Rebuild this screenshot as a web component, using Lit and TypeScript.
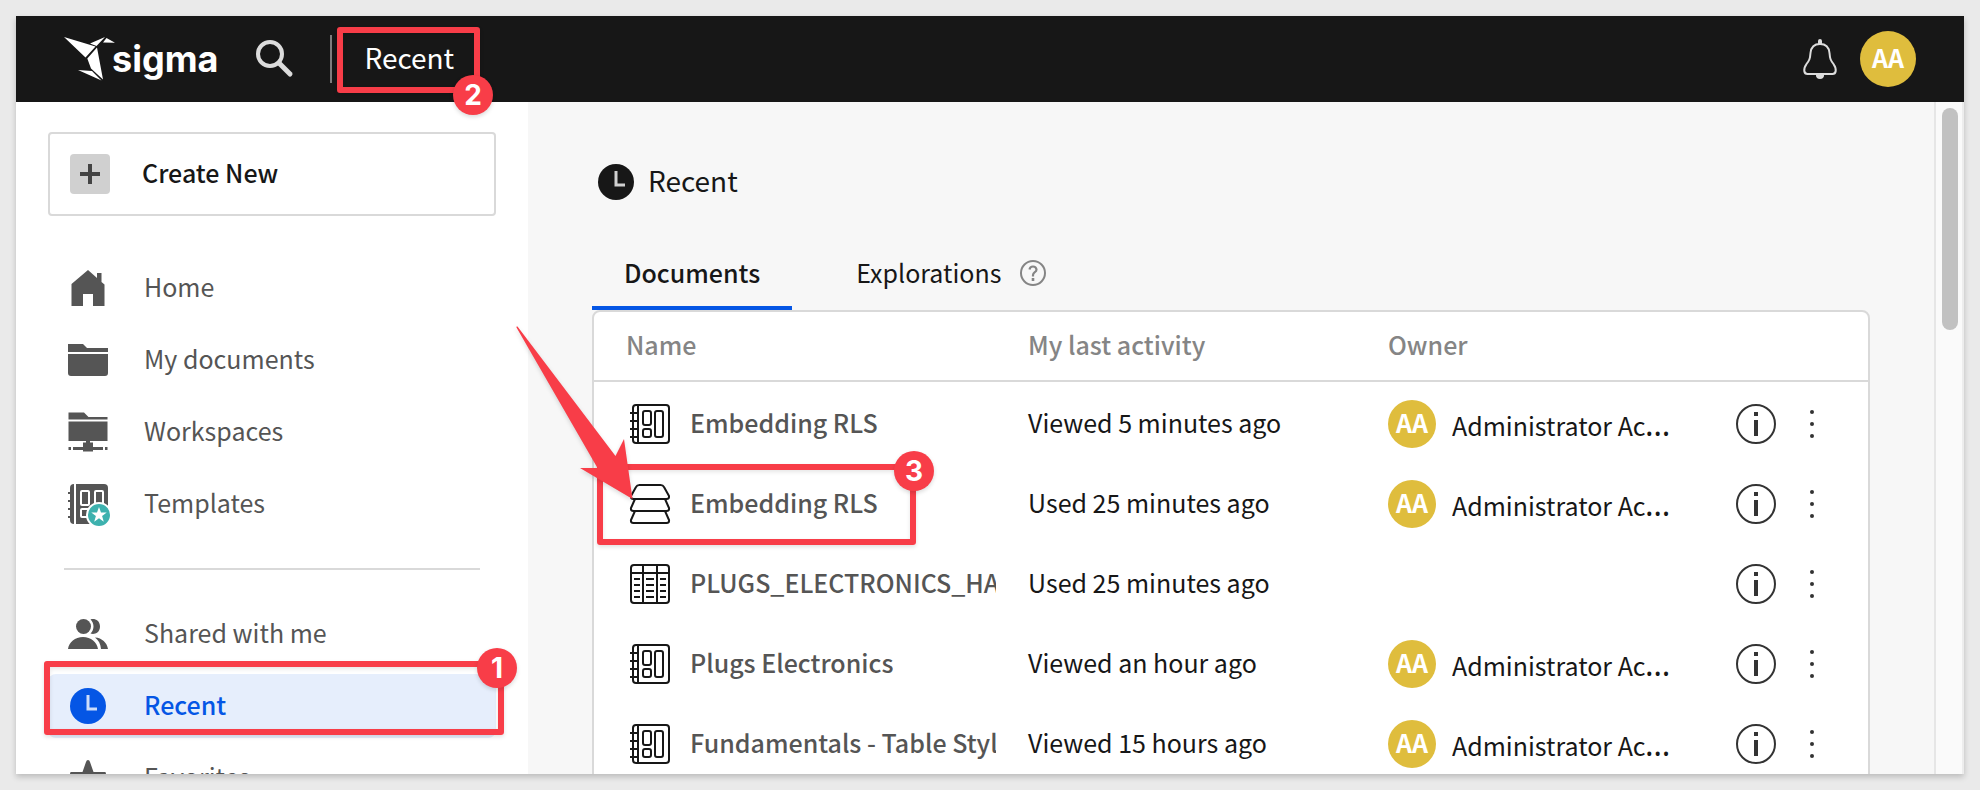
import { LitElement, html, svg, css, nothing } from "lit";
import { customElement, property, state } from "lit/decorators.js";
import { classMap } from "lit/directives/class-map.js";

const workbook = svg`
  <g fill="none" stroke="currentColor" stroke-width="2">
    <rect x="3" y="1" width="36" height="38" rx="3"/>
    <path d="M8 1v38M0 9h8M0 17h8M0 25h8M0 33h8"/>
    <rect x="13" y="7" width="8" height="14" rx="2"/>
    <rect x="13" y="25" width="8" height="8" rx="2"/>
    <rect x="25" y="7" width="8" height="26" rx="2"/>
  </g>`;

const ICONS: Record<string, unknown> = {
  home: svg`<path fill="currentColor" d="M20 2l9 8V5h4.500v9l3 2.500V38H25V26H15v12H3.500V16z"/>`,
  folder: svg`<path fill="currentColor" d="M0 4h15l4 4h21v4H0zM0 14h40v19q0 3-3 3H3q-3 0-3-3z"/>`,
  workspaces: svg`<path fill="currentColor" d="M.5.5H16l4.500 4.500h19v2.500H.5zM.5 9.500h39V29H22v1.500h3V35h10v3H25v1.500H15V38H5v-3h10v-4.500h3V29H.5zM.5 35H3v3H.5zM37 35h2.500v3H37z"/>`,
  templates: svg`
    <rect x="2" y="0" width="38" height="40" rx="4" fill="currentColor"/>
    <path d="M0 9h3M0 17h3M0 25h3M0 33h3" stroke="currentColor" stroke-width="2"/>
    <path d="M7 0v40" stroke="#fff" stroke-width="2"/>
    <g fill="none" stroke="#fff" stroke-width="2">
      <rect x="13" y="7" width="8" height="14" rx="1"/><rect x="27" y="7" width="8" height="14" rx="1"/><rect x="13" y="25" width="8" height="8" rx="1"/>
    </g>
    <circle cx="31" cy="31" r="12" fill="#3db1ae" stroke="#fff" stroke-width="2"/>
    <path fill="#fff" d="M31 23l2 5.500h5.700l-4.600 3.500 1.700 5.700-4.800-3.400-4.800 3.400 1.700-5.700-4.600-3.500H29z"/>`,
  shared: svg`<g fill="currentColor"><circle cx="15.500" cy="12.500" r="7.500"/>
    <path d="M22.500 5.500c3.500-1.500 9.500.5 9.500 7s-6 8.500-9.500 7c4-4 4-10 0-14z"/>
    <path d="M0 35c1-7 7-12 15-12s14 5 15 12zM27 23.500c7 .5 12 5 13 11.500h-7c-.3-5-2.500-9-6-11.500z"/></g>`,
  recent: svg`<circle cx="20" cy="20" r="18" fill="currentColor"/><path d="M20 9v14h9" fill="none" stroke="#fff" stroke-opacity=".8" stroke-width="3"/>`,
  favorites: svg`<path fill="currentColor" d="M20 2q1.500 0 2 2l3.500 10H37q2 1 0 3l-9 7 4 13q-1 2-3 1l-9-7-9 7q-2 1-3-1l4-13-9-7q-2-2 0-3h11.500L18 4q.5-2 2-2z"/>`,
  workbook,
  dataset: svg`<g fill="none" stroke="currentColor" stroke-width="2" stroke-linejoin="round">
    <path d="M9.500 1h21q2.500 0 3.500 2l5 9q.5 3-2.500 3h-33q-3 0-2.500-3l5-9q1-2 3.500-2z"/>
    <path d="M5 15l-4 9q-.5 3 2.500 3h33q3 0 2.500-3l-4-9M5 27l-4 9q-.5 3 2.500 3h33q3 0 2.500-3l-4-9"/></g>`,
  table: svg`<g fill="none" stroke="currentColor" stroke-width="2"><rect x="1" y="1" width="38" height="38" rx="3"/>
    <path d="M1 9h38M13 1v38M27 1v38"/>
    <path d="M4 15h6M16 15h8M30 15h6M4 21h6M16 21h8M30 21h6M4 27h6M16 27h8M30 27h6M4 33h6M16 33h8M30 33h6"/></g>`,
  info: svg`<circle cx="20" cy="20" r="19" fill="none" stroke="currentColor" stroke-width="2"/><path fill="currentColor" d="M18 8h4v4h-4zM18 16h4v16h-4z"/>`,
};

const icon = (name: string) =>
  html`<svg class="icon" viewBox="0 0 40 40" width="40" height="40" aria-hidden="true">${ICONS[name]}</svg>`;

interface NavEntry { id: string; label: string; }
const PRIMARY: NavEntry[] = [
  { id: "home", label: "Home" },
  { id: "folder", label: "My documents" },
  { id: "workspaces", label: "Workspaces" },
  { id: "templates", label: "Templates" },
];
const SECONDARY: NavEntry[] = [
  { id: "shared", label: "Shared with me" },
  { id: "recent", label: "Recent" },
  { id: "favorites", label: "Favorites" },
];

interface Doc { kind: string; name: string; activity: string; owner?: string; }
const DOCS: Doc[] = [
  { kind: "workbook", name: "Embedding RLS", activity: "Viewed 5 minutes ago", owner: "Administrator Account" },
  { kind: "dataset", name: "Embedding RLS", activity: "Used 25 minutes ago", owner: "Administrator Account" },
  { kind: "table", name: "PLUGS_ELECTRONICS_HANDS_ON_LAB_DATA", activity: "Used 25 minutes ago" },
  { kind: "workbook", name: "Plugs Electronics", activity: "Viewed an hour ago", owner: "Administrator Account" },
  { kind: "workbook", name: "Fundamentals - Table Styles", activity: "Viewed 15 hours ago", owner: "Administrator Account" },
];

const shared = css`
  * { box-sizing: border-box; }
  .icon { display: block; flex: none; overflow: visible; }
  button { font: inherit; color: inherit; background: none; border: 0; padding: 0; margin: 0; cursor: pointer; }
  a { color: inherit; text-decoration: none; }
  .label { display: block; padding-bottom: 4px; }
  .avatar {
    display: grid; place-items: center; flex: none; width: 48px; height: 48px; padding-bottom: 4px; border-radius: 50%;
    background: #dfbd3d; color: #fff; font-size: 25px; line-height: 36px; font-weight: 700;
  }
`;

@customElement("app-header")
class AppHeader extends LitElement {
  static styles = [shared, css`
    :host { display: block; flex: none; }
    .bar { display: flex; align-items: center; height: 86px; padding: 0 48px; background: #171717; color: #fff; }
    .logo { display: flex; align-items: center; }
    .bird { display: block; margin-right: -4px; }
    .word { font: 700 36px/44px Inter, sans-serif; }
    .search { margin-left: 37px; padding-bottom: 2px; color: #dcdcdc; }
    .rule { width: 2px; height: 48px; margin: 0 32px 0 37px; background: #7d7d7d; }
    .crumb { font-size: 28px; line-height: 40px; }
    .tools { display: flex; align-items: center; gap: 22px; margin-left: auto; }
    .bell { color: #dcdcdc; }
    .large { width: 56px; height: 56px; }
  `];
  render() {
    return html`<header class="bar">
      <a class="logo" href="#" aria-label="sigma">
        <svg class="bird" width="52" height="44" viewBox="0 0 52 44" fill="#fff" aria-hidden="true">
          <path d="M0 0l31.500 9.500L21.500 20.500zM26 6.500L41 0l-8.500 9zM39 5.500l3.500-4.500 8.500 4.700zM33 10.500l6 32-12-11L23.300 21.500zM14 33l14 1 9.500 9.500z"/>
        </svg>
        <span class="word">sigma</span>
      </a>
      <button class="search" aria-label="Search">
        <svg class="icon" width="38" height="38" viewBox="0 0 38 38" fill="none" stroke="currentColor" stroke-width="4">
          <circle cx="15" cy="15" r="12"/><path d="M24 24l11 11" stroke-linecap="round" stroke-width="5"/>
        </svg>
      </button>
      <span class="rule"></span>
      <span class="crumb label">Recent</span>
      <div class="tools">
        <button class="bell" aria-label="Notifications">
          <svg class="icon" width="36" height="40" viewBox="0 0 36 40" fill="none" stroke="currentColor" stroke-width="2">
            <path d="M18 5c-6 0-9 4-9.500 9-.5 6-1 7-4 11-2 3-2.500 5-2.200 7 .3 2 1.500 3 3.200 3h25c1.700 0 2.900-1 3.200-3 .3-2-.2-4-2.200-7-3-4-3.500-5-4-11C27 9 24 5 18 5z"/>
            <path d="M16 5V2q0-2 2-2t2 2v3zM14 35h8q0 4-4 4t-4-4z" fill="currentColor" stroke="none"/>
            <path d="M15 36q0 3 3 3t3-3z" fill="currentColor"/>
          </svg>
        </button>
        <button class="avatar large" aria-label="Account">AA</button>
      </div>
    </header>`;
  }
}

@customElement("app-sidebar")
class AppSidebar extends LitElement {
  @property() current = "recent";
  static styles = [shared, css`
    :host { display: block; flex: none; width: 512px; overflow: hidden; background: #fff; }
    .side { padding: 30px 32px 0; }
    .create {
      display: flex; align-items: center; gap: 32px; width: 100%; height: 84px; padding: 0 20px;
      border: 2px solid #d9d9d9; border-radius: 4px; font-weight: 500; color: #171717;
    }
    .plus { display: grid; place-items: center; width: 40px; height: 40px; border-radius: 4px; background: #d0d0d0; }
    .list { list-style: none; margin: 0; padding: 0; display: flex; flex-direction: column; gap: 8px; }
    .first { margin-top: 40px; }
    .item { display: flex; align-items: center; gap: 36px; height: 64px; padding: 0 20px; border-radius: 8px; color: #555; }
    .active { background: #e6eefc; color: #0556e5; font-weight: 500; }
    .split { height: 2px; margin: 32px 16px; border: 0; background: #d9d9d9; }
  `];
  private entry(n: NavEntry) {
    const on = n.id === this.current;
    return html`<li><a href="#" class=${classMap({ item: true, active: on })} aria-current=${on ? "page" : nothing}>${icon(n.id)}<span class="label">${n.label}</span></a></li>`;
  }
  render() {
    return html`<nav class="side">
      <button class="create">
        <span class="plus"><svg width="20" height="20" viewBox="0 0 20 20" aria-hidden="true"><path d="M10 0v20M0 10h20" stroke="#444" stroke-width="4"/></svg></span>
        <span class="label">Create New</span>
      </button>
      <ul class="list first">${PRIMARY.map((n) => this.entry(n))}</ul>
      <hr class="split" />
      <ul class="list">${SECONDARY.map((n) => this.entry(n))}</ul>
    </nav>`;
  }
}

@customElement("recent-documents")
class RecentDocuments extends LitElement {
  @state() private tab = "Documents";
  static styles = [shared, css`
    :host { display: block; flex: 1; min-width: 0; overflow: hidden; background: #f7f7f7; color: #171717; }
    .page { padding: 60px 64px 0; }
    .title { display: flex; align-items: center; gap: 12px; height: 40px; margin: 0; padding-left: 4px; font-size: 28px; line-height: 40px; font-weight: 400; }
    .tabs { display: flex; gap: 32px; margin-top: 36px; }
    .tab { display: flex; align-items: center; gap: 18px; height: 72px; padding: 0 32px; border-bottom: 4px solid transparent; }
    .selected { border-color: #0556e5; font-weight: 500; }
    .help { display: block; }
    .card { border: 2px solid #d9d9d9; border-radius: 8px 8px 0 0; background: #fff; }
    table { width: 100%; table-layout: fixed; border-collapse: separate; border-spacing: 0; }
    .c-activity { width: 360px; }
    .c-owner { width: 344px; }
    .c-actions { width: 152px; }
    th { height: 70px; padding: 0 16px 4px; text-align: left; font-weight: 500; color: #858585; border-bottom: 2px solid #d9d9d9; }
    td { height: 80px; padding: 0 16px; }
    th:first-child { padding-left: 32px; }
    td:first-child { padding-left: 36px; }
    tr:first-child td { padding-top: 2px; height: 82px; }
    .doc { display: flex; align-items: center; gap: 20px; font-weight: 500; }
    .doc-name { color: #555; overflow: hidden; white-space: nowrap; }
    .owner { display: flex; align-items: center; gap: 16px; padding-right: 24px; }
    .owner-name { overflow: hidden; white-space: nowrap; text-overflow: ellipsis; font-family: "Noto Sans", sans-serif; font-size: 32px; }
    .owner-text { font-family: "Noto Sans CJK KR", "Noto Sans", sans-serif; font-size: 25px; }
    .actions { display: flex; align-items: center; gap: 24px; padding-left: 4px; color: #333; }
    .more { width: 24px; height: 40px; display: grid; place-items: center; }
  `];
  private row(d: Doc) {
    return html`<tr>
      <td><a class="doc" href="#">${icon(d.kind)}<span class="doc-name label">${d.name}</span></a></td>
      <td><span class="label">${d.activity}</span></td>
      <td>${d.owner ? html`<div class="owner"><span class="avatar">AA</span><span class="owner-name"><span class="owner-text">${d.owner}</span></span></div>` : nothing}</td>
      <td><div class="actions">
        <button aria-label="Details">${icon("info")}</button>
        <button class="more" aria-label="More"><svg width="6" height="30" viewBox="0 0 6 30" fill="currentColor"><circle cx="3" cy="3" r="2"/><circle cx="3" cy="15" r="2"/><circle cx="3" cy="27" r="2"/></svg></button>
      </div></td>
    </tr>`;
  }
  private tabButton(name: string, extra: unknown = nothing) {
    return html`<button role="tab" aria-selected=${this.tab === name} class=${classMap({ tab: true, selected: this.tab === name })} @click=${() => (this.tab = name)}>${name}${extra}</button>`;
  }
  render() {
    return html`<main class="page">
      <h1 class="title">${icon("recent")}<span class="label">Recent</span></h1>
      <div class="tabs" role="tablist">
        ${this.tabButton("Documents")}
        ${this.tabButton("Explorations", html`<svg class="help" width="28" height="28" viewBox="0 0 28 28" fill="none" stroke="#858585" stroke-width="2" aria-hidden="true"><circle cx="14" cy="15" r="12"/><path d="M10.500 11.500q.5-3 3.500-3t3.500 3q0 1.500-1.700 2.700T14 17v1.500" stroke-width="2.200"/><path d="M14 20v3" stroke-width="2.600"/></svg>`)}
      </div>
      <div class="card">
        <table>
          <colgroup><col /><col class="c-activity" /><col class="c-owner" /><col class="c-actions" /></colgroup>
          <thead><tr><th>Name</th><th>My last activity</th><th>Owner</th><th aria-label="Actions"></th></tr></thead>
          <tbody>${DOCS.map((d) => this.row(d))}</tbody>
        </table>
      </div>
    </main>`;
  }
}

@customElement("app-root")
class AppRoot extends LitElement {
  static styles = [shared, css`
    :host {
      display: block; height: 100vh; padding: 16px; box-sizing: border-box; background: #eaeaea;
      font: 400 25px/36px "Noto Sans CJK KR", "Noto Sans CJK SC", "Noto Sans", sans-serif;
    }
    .window { position: relative; display: flex; flex-direction: column; height: 100%; box-shadow: 0 3px 6px rgba(0, 0, 0, 0.2); }
    .body { display: flex; flex: 1; min-height: 0; }
    .track { flex: none; width: 30px; padding: 6px 4px 0 6px; border-left: 2px solid #e6e6e6; border-right: 2px solid #ededed; background: #fafafa; }
    .thumb { height: 222px; border-radius: 8px; background: #c1c1c1; }
    .notes { position: absolute; inset: 0; pointer-events: none; }
    .mark { position: absolute; border: 6px solid #f83d48; border-radius: 3px; box-shadow: 0 2px 4px rgba(0, 0, 0, 0.12), inset 0 2px 4px rgba(0, 0, 0, 0.1); }
    .num {
      position: absolute; right: 0; top: 0; display: grid; place-items: center; width: 40px; height: 40px; border-radius: 50%;
      background: #f83d48; color: #fff; font: 700 28px/40px Inter, sans-serif; box-shadow: 0 2px 4px rgba(0, 0, 0, 0.15);
    }
    .m1 { left: 28px; top: 645px; width: 460px; height: 74px; }
    .m1 .num { right: -19px; top: -19px; }
    .m2 { left: 321px; top: 11px; width: 143px; height: 66px; }
    .m2 .num { right: -19px; top: 42px; }
    .m3 { left: 581px; top: 448px; width: 319px; height: 81px; }
    .m3 .num { right: -24px; top: -19px; }
    .arrow { position: absolute; left: 500px; top: 310px; filter: drop-shadow(0 2px 2px rgba(0, 0, 0, 0.15)); }
  `];
  render() {
    return html`<div class="window">
      <app-header></app-header>
      <div class="body">
        <app-sidebar current="recent"></app-sidebar>
        <recent-documents></recent-documents>
        <div class="track"><div class="thumb"></div></div>
      </div>
      <div class="notes">
        <div class="mark m1"><span class="num">1</span></div>
        <div class="mark m2"><span class="num">2</span></div>
        <div class="mark m3"><span class="num">3</span></div>
        <svg class="arrow" width="118" height="176" viewBox="0 0 118 176" fill="#f83d48" aria-hidden="true">
          <path d="M.5 1.500Q0 0 1.500.5L99.500 130l8.500-17 8.500 60L64 142h17.500z"/>
        </svg>
      </div>
    </div>`;
  }
}
